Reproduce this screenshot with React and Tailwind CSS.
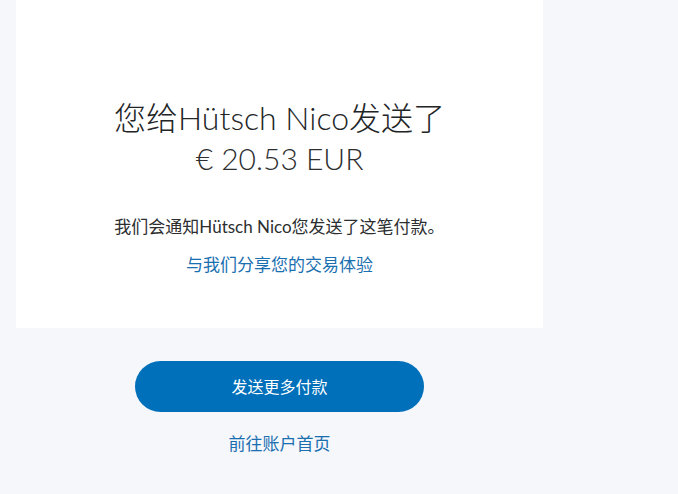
import React from 'react'

const font = { fontFamily: 'Lato, "Noto Sans CJK SC", sans-serif' }

export default function App() {
  return (
    <div className="min-h-[494px] w-[678px] bg-[#f5f7fa] pl-4" style={font}>
      <div className="w-[527px]">
        {/* confirmation card */}
        <div className="h-[328px] bg-white pt-[98px] text-center text-[#2c2e2f]">
          <h1 className="text-[32px] leading-[40px] font-light text-[#222426]">您给Hütsch Nico发送了</h1>
          <div className="text-[30px] leading-[40px] font-light">€ 20.53 EUR</div>
          <p className="mt-[37px] text-[17px] leading-6">我们会通知Hütsch Nico您发送了这笔付款。</p>
          <a className="mt-[14px] block text-[17px] leading-6 text-[#1a6fb0]">与我们分享您的交易体验</a>
        </div>

        <div className="flex flex-col items-center">
          <button className="mt-[33px] h-[51px] w-[289px] rounded-full bg-[#0070ba] text-[16px] text-white">
            发送更多付款
          </button>
          <a className="mt-5 block text-[17px] leading-6 text-[#1a6fb0]">前往账户首页</a>
        </div>
      </div>
    </div>
  )
}
